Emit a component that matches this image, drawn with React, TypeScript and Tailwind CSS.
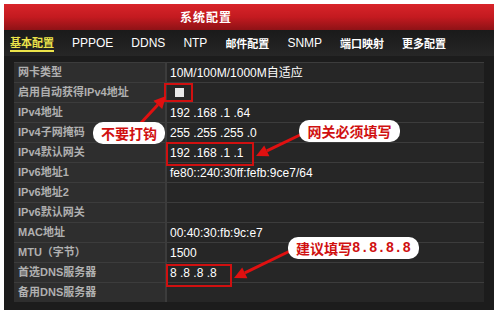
import React from "react";

const rows: [string, string][] = [
  ["网卡类型", "10M/100M/1000M自适应"],
  ["启用自动获得IPv4地址", "__checkbox"],
  ["IPv4地址", "192 .168 .1 .64"],
  ["IPv4子网掩码", "255 .255 .255 .0"],
  ["IPv4默认网关", "192 .168 .1 .1"],
  ["IPv6地址1", "fe80::240:30ff:fefb:9ce7/64"],
  ["IPv6地址2", ""],
  ["IPv6默认网关", ""],
  ["MAC地址", "00:40:30:fb:9c:e7"],
  ["MTU（字节）", "1500"],
  ["首选DNS服务器", "8 .8 .8 .8"],
  ["备用DNS服务器", ""],
];

const tabs = ["PPPOE", "DDNS", "NTP", "邮件配置", "SNMP", "端口映射", "更多配置"];

function Arrow({ x1, y1, x2, y2 }: { x1: number; y1: number; x2: number; y2: number }) {
  const dx = x2 - x1;
  const dy = y2 - y1;
  const len = Math.sqrt(dx * dx + dy * dy);
  const ux = dx / len;
  const uy = dy / len;
  const hl = 12;
  const hw = 6;
  const bx = x2 - ux * hl;
  const by = y2 - uy * hl;
  const px = -uy;
  const py = ux;
  return (
    <g>
      <line x1={x1} y1={y1} x2={bx} y2={by} stroke="#e01010" strokeWidth={3} />
      <polygon
        points={`${x2},${y2} ${bx + px * hw},${by + py * hw} ${bx - px * hw},${by - py * hw}`}
        fill="#e01010"
      />
    </g>
  );
}

export default function App() {
  return (
    <div
      className="relative w-[500px] h-[315px] bg-white overflow-hidden"
      style={{ fontFamily: '"Liberation Sans", "Noto Sans CJK SC", sans-serif' }}
    >
      <div className="absolute left-[4px] top-[4px] w-[490px] h-[306px] bg-[#1c1c1c] flex flex-col">
        <div className="h-[26px] bg-gradient-to-b from-[#d8242a] via-[#c41a20] to-[#8e1216] flex items-center justify-center pr-[86px]">
          <span className="text-white text-[12px] font-bold tracking-[1px]" style={{ fontFamily: '"Noto Sans CJK SC", serif' }}>系统配置</span>
        </div>
        <div className="h-[26px] bg-gradient-to-b from-[#1a1a1a] to-[#262626] flex items-center pl-[6px] text-[12px] text-white">
          <span className="text-[#ece34a] text-[11px] font-bold border-b-2 border-[#ece34a] leading-[14px] pb-[1px]" style={{ fontFamily: '"Noto Sans CJK SC", serif' }}>基本配置</span>
          <div className="flex items-center gap-[18px] ml-[18px]">
            {tabs.map((t) =>
              /[\u4e00-\u9fff]/.test(t) ? (
                <span key={t} className="font-bold text-[11px]" style={{ fontFamily: '"Noto Sans CJK SC", serif' }}>{t}</span>
              ) : (
                <span key={t}>{t}</span>
              )
            )}
          </div>
        </div>
        <div className="mt-[6px] mx-[10px] flex flex-col gap-[1px] bg-[#3c3c3c] border-t border-[#3c3c3c]">
          {rows.map(([label, value]) => (
            <div key={label} className="h-[19px] flex gap-[2px] bg-[#3c3c3c]">
              <div className="w-[151px] bg-[#2e2e2e] pl-[4px] flex items-center text-[11px] text-[#b0b0b0] font-bold whitespace-nowrap">{label}</div>
              <div className="flex-1 bg-[#262626] pl-[3px] flex items-center text-[12px] text-white whitespace-nowrap">
                {value === "__checkbox" ? (
                  <div className="w-[9px] h-[9px] bg-[#e8e8e8] ml-[5px]" />
                ) : (
                  value
                )}
              </div>
            </div>
          ))}
        </div>
      </div>

      {/* Red boxes */}
      <div className="absolute left-[164px] top-[83px] w-[29px] h-[19px] border-2 border-[#d01010]" />
      <div className="absolute left-[166px] top-[142px] w-[88px] h-[24px] border-2 border-[#d01010]" />
      <div className="absolute left-[166px] top-[264px] w-[66px] h-[23px] border-2 border-[#d01010]" />

      <svg className="absolute left-0 top-0" width={500} height={315}>
        <Arrow x1={140} y1={124} x2={166} y2={96} />
        <Arrow x1={302} y1={134} x2={256} y2={156} />
        <Arrow x1={290} y1={251} x2={234} y2={278} />
      </svg>

      {/* Bubbles */}
      <div className="absolute left-[93px] top-[122px] w-[72px] h-[22px] rounded-[10px] bg-white flex items-center justify-center text-[#d01010] text-[14px] font-bold" style={{ fontFamily: '"Noto Sans CJK SC", sans-serif' }}>不要打钩</div>
      <div className="absolute left-[299px] top-[120px] w-[101px] h-[22px] rounded-[10px] bg-white flex items-center justify-center text-[#d01010] text-[14px] font-bold" style={{ fontFamily: '"Noto Sans CJK SC", sans-serif' }}>网关必须填写</div>
      <div className="absolute left-[288px] top-[237px] w-[131px] h-[22px] rounded-[10px] bg-white flex items-center justify-center text-[#d01010] text-[14px] font-bold" style={{ fontFamily: '"Noto Sans CJK SC", sans-serif' }}>
        建议填写<span style={{ fontFamily: '"Liberation Mono", monospace' }}>8.8.8.8</span>
      </div>
    </div>
  );
}
